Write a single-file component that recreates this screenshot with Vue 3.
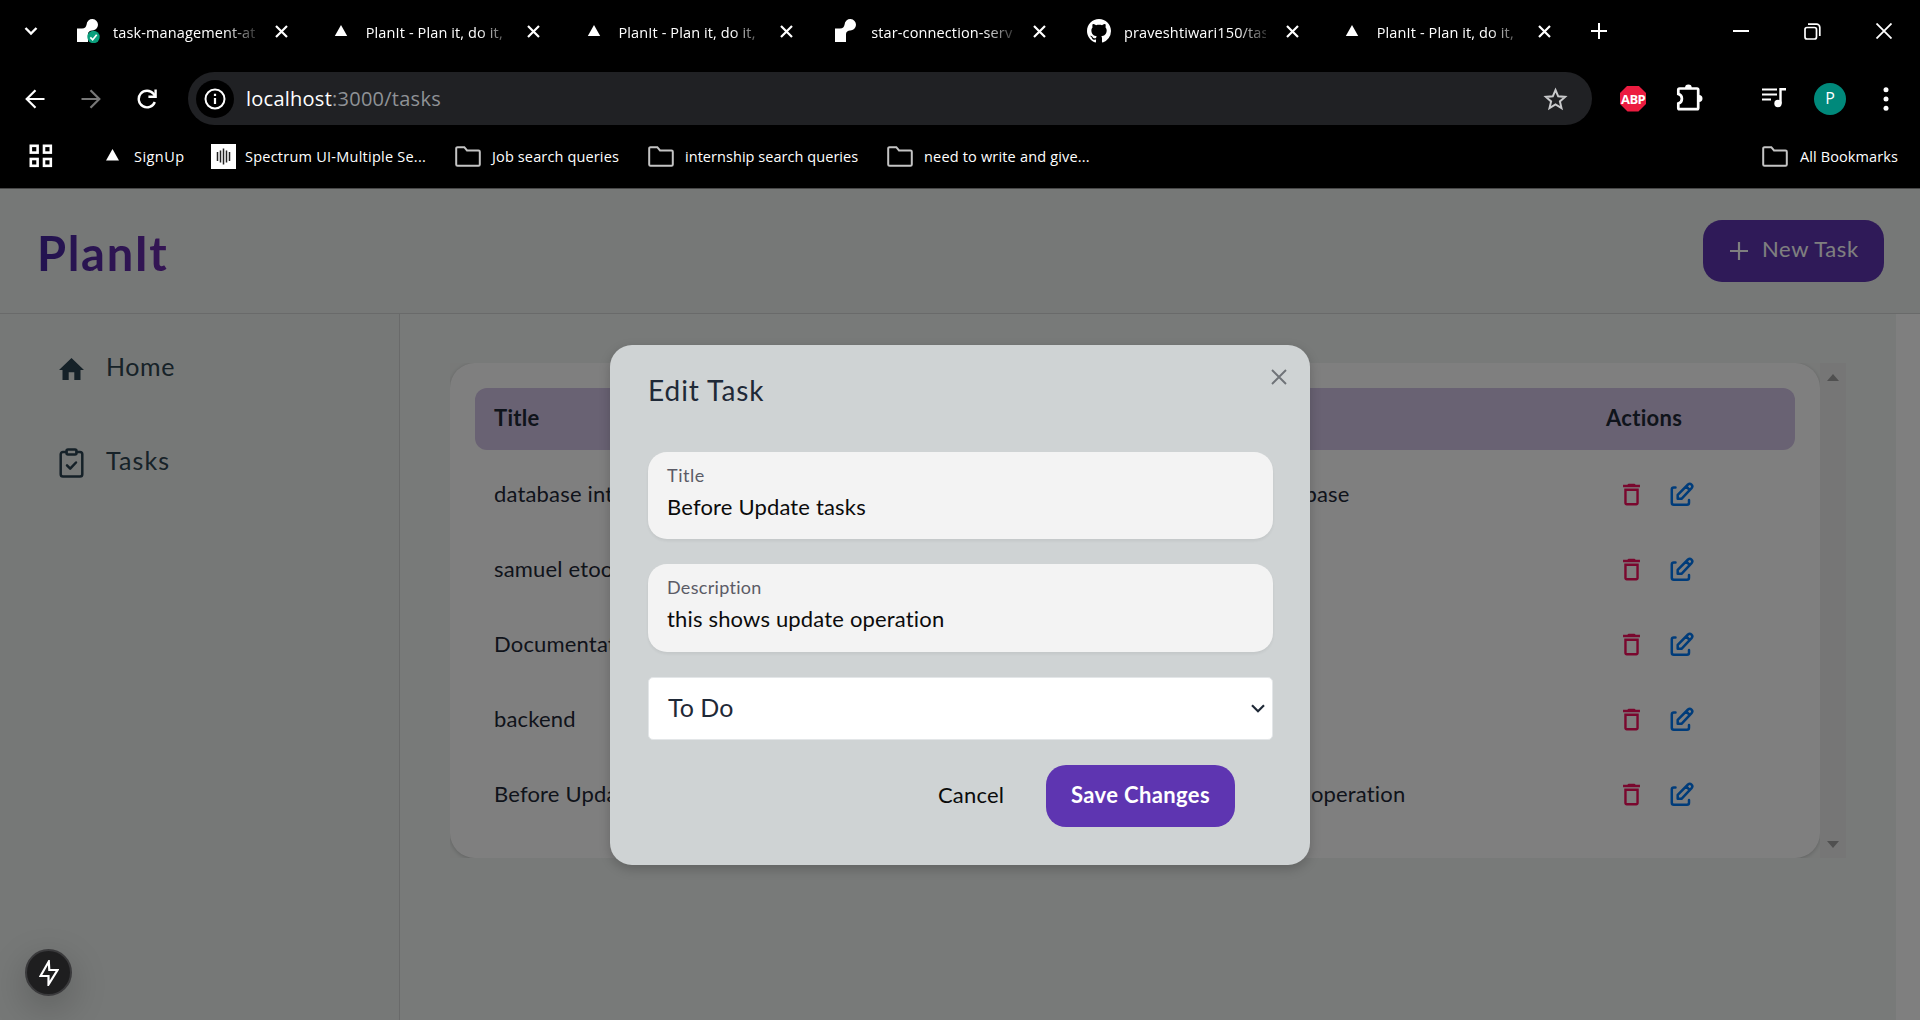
<script setup>
const tabs = [
  { icon: 'render-ok', label: 'task-management-at' },
  { icon: 'tri', label: 'PlanIt - Plan it, do it,' },
  { icon: 'tri', label: 'PlanIt - Plan it, do it,' },
  { icon: 'render', label: 'star-connection-serv' },
  { icon: 'github', label: 'praveshtiwari150/tas' },
  { icon: 'tri', label: 'PlanIt - Plan it, do it,' },
]
const tasks = [
  { title: 'database integration', description: 'implemented database' },
  { title: 'samuel etoo', description: '' },
  { title: 'Documentation', description: '' },
  { title: 'backend', description: '' },
  { title: 'Before Update tasks', description: 'this shows update operation' },
]
</script>

<template>
  <div class="window">
    <div class="browser">
      <div class="tabs">
        <svg class="tab-list" width="14" height="10" viewBox="0 0 14 10"><path d="M1.5 2l5.5 5.5L12.500 2" fill="none" stroke="#fff" stroke-width="2.4" /></svg>
        <div v-for="(t, i) in tabs" :key="i" class="tab">
          <svg v-if="t.icon === 'tri'" class="favicon" viewBox="0 0 24 24"><path d="M12 6l6.200 11H5.800z" fill="#fff" /></svg>
          <svg v-else-if="t.icon === 'github'" class="favicon" viewBox="0 0 16 16"><path fill="#fff" d="M8 0C3.58 0 0 3.58 0 8c0 3.54 2.29 6.53 5.47 7.59.4.07.55-.17.55-.38 0-.19-.01-.82-.01-1.490-2.010.37-2.530-.49-2.690-.94-.09-.23-.48-.94-.82-1.130-.28-.15-.68-.52-.01-.53.63-.01 1.080.58 1.230.82.72 1.210 1.870.87 2.330.66.07-.52.28-.87.51-1.070-1.780-.2-3.640-.89-3.640-3.950 0-.87.31-1.590.82-2.150-.08-.2-.36-1.020.08-2.120 0 0 .67-.21 2.200.82.64-.18 1.320-.27 2-.27s1.360.09 2 .27c1.530-1.040 2.200-.82 2.200-.82.44 1.100.16 1.920.08 2.120.51.56.82 1.270.82 2.150 0 3.070-1.870 3.750-3.650 3.950.29.25.54.73.54 1.480 0 1.070-.01 1.930-.01 2.200 0 .21.15.46.55.38A8.010 8.010 0 0 0 16 8c0-4.420-3.580-8-8-8z" /></svg>
          <svg v-else class="favicon" viewBox="0 0 24 24">
            <path d="M1 9.500h5c3 0 4-1.500 4.600-4A5.700 5.700 0 1 1 16 11.500c-2 .2-4 1-4 3.500v8H1z" fill="#fff" />
            <template v-if="t.icon === 'render-ok'">
              <circle cx="17.500" cy="18" r="6.200" fill="#0a9e7c" />
              <path d="M14.300 18.300l2.400 2.500 4-5" fill="none" stroke="#fff" stroke-width="1.700" />
            </template>
          </svg>
          <span class="tab-label">{{ t.label }}</span>
          <svg class="tab-close" viewBox="0 0 13 13"><path d="M1 1l11 11M12 1L1 12" stroke="#fff" stroke-width="2.200" /></svg>
        </div>
        <svg class="tab-new" width="16" height="16" viewBox="0 0 16 16"><path d="M8 0v16M0 8h16" stroke="#fff" stroke-width="2" /></svg>
        <div class="win-controls">
          <svg width="16" height="16" viewBox="0 0 16 16"><path d="M0 8h16" stroke="#fff" stroke-width="2" /></svg>
          <svg width="17" height="17" viewBox="0 0 17 17" fill="none" stroke="#fff" stroke-width="1.700"><rect x="1" y="4.500" width="11.500" height="11.500" rx="2" /><path d="M4 1.200h8.500a3.300 3.300 0 0 1 3.300 3.300V13" /></svg>
          <svg width="16" height="16" viewBox="0 0 16 16"><path d="M.5.5l15 15M15.500.5l-15 15" stroke="#fff" stroke-width="1.800" /></svg>
        </div>
      </div>

      <div class="toolbar">
        <svg class="nav-back" width="20" height="20" viewBox="0 0 20 20" fill="none" stroke="#fff" stroke-width="2.200"><path d="M19.500 10H2M10.500 1.200L1.700 10l8.800 8.800" /></svg>
        <svg class="nav-fwd" width="20" height="20" viewBox="0 0 20 20" fill="none" stroke="#777" stroke-width="2.200"><path d="M.5 10H18M9.500 1.200l8.800 8.800-8.800 8.800" /></svg>
        <svg class="nav-reload" width="20" height="20" viewBox="0 0 20 20" fill="none" stroke="#fff" stroke-width="2.400"><path d="M17.800 13A8.300 8.300 0 1 1 16.500 4.800L18 7" /><path d="M18.600.5v7.300h-7.200" /></svg>
        <div class="address">
          <span class="site-info"><svg width="22" height="22" viewBox="0 0 22 22"><circle cx="11" cy="11" r="9.500" fill="none" stroke="#fff" stroke-width="2" /><path d="M11 10v6M11 5.800v2.200" stroke="#fff" stroke-width="2.200" /></svg></span>
          <span class="url"><b>localhost</b><i>:3000/tasks</i></span>
          <svg class="star" width="25" height="24" viewBox="0 0 25 24" fill="none" stroke="#c9cacc" stroke-width="2"><path d="M12.500 3l2.700 6.300 6.900.6-5.200 4.500 1.600 6.700-6-3.600-6 3.600 1.600-6.700-5.200-4.500 6.900-.6z" /></svg>
        </div>
        <span class="abp">ABP</span>
        <svg class="puzzle" width="28" height="28" viewBox="0 0 28 28"><path d="M4.500 4.500H22a1.200 1.200 0 0 1 1.200 1.200V24a1.200 1.200 0 0 1-1.200 1.200H4.500A1.200 1.200 0 0 1 3.300 24v-4.500a5 5 0 0 0 0-9.600V5.700a1.200 1.200 0 0 1 1.200-1.200z" fill="none" stroke="#fff" stroke-width="2.700" /><path d="M10 4a3.400 3.400 0 0 1 6.800 0zM24 11a3.400 3.400 0 0 1 0 7z" fill="#fff" /></svg>
        <svg class="queue" width="24" height="20" viewBox="0 0 24 20"><path d="M0 1.500h15M0 6.500h15M0 11.500h9" stroke="#fff" stroke-width="2.100" /><path d="M18.500 15.500V1.300H24" fill="none" stroke="#fff" stroke-width="2.400" /><circle cx="16" cy="15.500" r="3.700" fill="#fff" /></svg>
        <span class="avatar">P</span>
        <svg class="dots" width="6" height="24" viewBox="0 0 6 24" fill="#fff"><circle cx="3" cy="2.700" r="2.500" /><circle cx="3" cy="12" r="2.500" /><circle cx="3" cy="21.300" r="2.500" /></svg>
      </div>

      <div class="bookmarks">
        <svg class="apps" width="24" height="24" viewBox="0 0 24 24" fill="none" stroke="#fff" stroke-width="2.600"><rect x="1.800" y="1.800" width="6.800" height="6.800" /><rect x="15" y="1.800" width="6.800" height="6.800" /><rect x="1.800" y="15" width="6.800" height="6.800" /><rect x="15" y="15" width="6.800" height="6.800" /></svg>
        <svg class="bm-tri" width="13" height="12" viewBox="0 0 13 12"><path d="M6.500 0L13 11.500H0z" fill="#fff" /></svg>
        <span class="bm b1">SignUp</span>
        <svg class="bm-spec" width="25" height="25" viewBox="0 0 25 25"><rect width="25" height="25" fill="#fff" /><path d="M6.500 8v9M9.500 6.500v12M12.500 4.500v16M15.500 6.500v12M18.500 8v9" stroke="#222" stroke-width="1.500" /></svg>
        <span class="bm b2">Spectrum UI-Multiple Se...</span>
        <svg class="folder" viewBox="0 0 26 21"><path d="M2.500 1.200h6.800L12 4.400h11.500a1.300 1.300 0 0 1 1.300 1.300v12.800a1.300 1.300 0 0 1-1.300 1.300h-21a1.300 1.300 0 0 1-1.300-1.300v-16a1.300 1.300 0 0 1 1.300-1.300z" /></svg>
        <span class="bm b3">Job search queries</span>
        <svg class="folder" viewBox="0 0 26 21"><path d="M2.500 1.200h6.800L12 4.400h11.500a1.300 1.300 0 0 1 1.300 1.300v12.800a1.300 1.300 0 0 1-1.300 1.300h-21a1.300 1.300 0 0 1-1.300-1.300v-16a1.300 1.300 0 0 1 1.300-1.300z" /></svg>
        <span class="bm b4">internship search queries</span>
        <svg class="folder" viewBox="0 0 26 21"><path d="M2.500 1.200h6.800L12 4.400h11.500a1.300 1.300 0 0 1 1.300 1.300v12.800a1.300 1.300 0 0 1-1.300 1.300h-21a1.300 1.300 0 0 1-1.300-1.300v-16a1.300 1.300 0 0 1 1.300-1.300z" /></svg>
        <span class="bm b5">need to write and give...</span>
        <svg class="folder last" viewBox="0 0 26 21"><path d="M2.500 1.200h6.800L12 4.400h11.500a1.300 1.300 0 0 1 1.300 1.300v12.800a1.300 1.300 0 0 1-1.300 1.300h-21a1.300 1.300 0 0 1-1.300-1.300v-16a1.300 1.300 0 0 1 1.300-1.300z" /></svg>
        <span class="bm b6">All Bookmarks</span>
      </div>
    </div>

    <div class="app">
      <header class="header">
        <h1 class="logo">PlanIt</h1>
        <button class="new-task">
          <svg width="18" height="18" viewBox="0 0 18 18"><path d="M9 0v18M0 9h18" stroke="#fff" stroke-width="2.200" /></svg>
          <span>New Task</span>
        </button>
      </header>
      <div class="body">
        <nav class="sidebar">
          <a class="nav-item">
            <svg width="25" height="22" viewBox="0 0 25 22"><path d="M12.500 0L25 12h-3.500v10h-6.200v-7.800H9.700V22H3.500V12H0z" fill="#2a4250" /></svg>
            <span class="n1">Home</span>
          </a>
          <a class="nav-item">
            <svg width="25" height="30" viewBox="0 0 25 30" fill="none" stroke="#2a4250" stroke-width="2.500" stroke-linecap="round" stroke-linejoin="round"><path d="M7.500 4H4a2.300 2.300 0 0 0-2.300 2.300v19.900A2.300 2.300 0 0 0 4 28.500h17a2.300 2.300 0 0 0 2.300-2.300V6.300A2.300 2.300 0 0 0 21 4h-3.500" /><rect x="7.500" y="1.500" width="10" height="5" rx="1.500" /><path d="M8 17.300l3.200 3.400 5.800-6.200" /></svg>
            <span class="n2">Tasks</span>
          </a>
        </nav>
        <main class="content">
          <div class="table-scroll">
            <section class="card">
              <div class="thead"><span class="c-title">Title</span><span class="c-desc">Description</span><span class="c-act">Actions</span></div>
              <div v-for="(t, i) in tasks" :key="i" class="trow">
                <span class="c-title">{{ t.title }}</span>
                <span class="c-desc">{{ t.description }}</span>
                <span class="c-icons">
                  <svg class="trash" width="29" height="29" viewBox="0 0 24 24"><path fill="#f50f5d" d="M6 19c0 1.100.9 2 2 2h8c1.100 0 2-.9 2-2V7H6v12zM8 9h8v10H8V9zm7.500-5l-1-1h-5l-1 1H5v2h14V4z" /></svg>
                  <svg class="edit" width="24" height="24" viewBox="0 0 24 24" fill="none" stroke="#0078f5" stroke-width="2.500" stroke-linecap="round" stroke-linejoin="round"><path d="M5.500 5.500H3.800a2 2 0 0 0-2 2v13.200a2 2 0 0 0 2 2H17a2 2 0 0 0 2-2V18" /><path d="M7.700 16.800v-4L18 2.500a2.550 2.550 0 0 1 3.600 3.600L11.500 16.800zM16.300 4.500l3.300 3.300" /></svg>
                </span>
              </div>
            </section>
            <div class="scrollbar">
              <svg width="12" height="7" viewBox="0 0 12 7"><path d="M6 0l6 7H0z" fill="#a0a0a0" /></svg>
              <svg width="12" height="7" viewBox="0 0 12 7"><path d="M6 7L0 0h12z" fill="#a0a0a0" /></svg>
            </div>
          </div>
        </main>
      </div>

      <div class="backdrop">
        <section class="modal">
          <svg class="modal-close" width="16" height="16" viewBox="0 0 16 16"><path d="M1 1l14 14M15 1L1 15" stroke="#6f7378" stroke-width="1.900" /></svg>
          <h2>Edit Task</h2>
          <div class="field"><label class="l1">Title</label><span>Before Update tasks</span></div>
          <div class="field"><label class="l2">Description</label><span>this shows update operation</span></div>
          <div class="select"><span>To Do</span><svg width="14" height="9" viewBox="0 0 14 9"><path d="M1 1.200l6 6 6-6" fill="none" stroke="#1f2937" stroke-width="2.200" /></svg></div>
          <div class="actions"><span class="cancel">Cancel</span><button class="save">Save Changes</button></div>
        </section>
      </div>
      <div class="dev">
        <svg width="20" height="26" viewBox="0 0 20 26"><path d="M9.800 1.500L1.500 16h8v8.500L18.500 10h-8.200z" fill="none" stroke="#fff" stroke-width="2.200" /></svg>
      </div>
    </div>
  </div>
</template>

<style>
body { margin: 0; background: #000; overflow: hidden; }
</style>

<style scoped>
.window { width: 1920px; height: 1020px; display: flex; flex-direction: column; overflow: hidden; }
.window * { box-sizing: border-box; }
svg { flex: none; display: block; }
button { border: 0; padding: 0; font: inherit; letter-spacing: inherit; }

.browser { height: 189px; flex: none; background: #000; border-bottom: 1px solid #484848; color: #fff; font-family: "Open Sans", "Noto Sans", sans-serif; }
.tabs { height: 62px; display: flex; align-items: center; padding-left: 24px; }
.tab-list { margin-right: 38px; }
.tab { width: 252.750px; flex: none; display: flex; align-items: center; }
.favicon { width: 24px; height: 24px; }
.tab-label { width: 142px; margin-left: 13px; padding-top: 3px; font-size: 14.500px; line-height: 22px; letter-spacing: 0.120px; white-space: nowrap; overflow: hidden; -webkit-mask-image: linear-gradient(90deg, #000 112px, transparent 150px); mask-image: linear-gradient(90deg, #000 112px, transparent 150px); }
.tab-close { width: 13px; height: 13px; margin-left: 19.500px; }
.tab-new { margin-left: -2px; }
.win-controls { margin-left: auto; padding-right: 28px; display: flex; gap: 55px; align-items: center; }

.toolbar { height: 73px; display: flex; align-items: center; padding-left: 25px; }
.nav-fwd { margin-left: 36px; }
.nav-reload { margin-left: 36px; }
.address { margin-left: 31px; width: 1404px; height: 53px; border-radius: 27px; background: #202124; display: flex; align-items: center; padding: 0 24px 0 8px; }
.site-info { width: 38px; height: 38px; border-radius: 50%; background: #000; display: flex; align-items: center; justify-content: center; }
.url { margin-left: 12px; font-size: 20px; line-height: 30px; letter-spacing: 0.250px; }
.url b { font-weight: 400; }
.url i { font-style: normal; color: #8f9296; }
.star { margin-left: auto; }
.abp { width: 26px; height: 26px; margin-left: 28px; background: #ec1c40; clip-path: polygon(29% 0, 71% 0, 100% 29%, 100% 71%, 71% 100%, 29% 100%, 0 71%, 0 29%); font: 700 13px/26px "Open Sans", sans-serif; text-align: center; letter-spacing: -0.700px; }
.puzzle { margin-left: 29px; margin-top: -2px; }
.queue { margin-left: 59px; margin-top: -1px; }
.avatar { width: 32px; height: 32px; margin-left: 28px; border-radius: 50%; background: #00897b; text-align: center; font-size: 16px; line-height: 31px; }
.dots { margin-left: 37px; }

.bookmarks { height: 42px; display: flex; align-items: center; padding: 0 22px 0 29px; font-size: 14.500px; line-height: 20px; white-space: nowrap; }
.bm-tri { margin-left: 53px; margin-top: -2px; }
.bm { margin-left: 11px; padding-top: 1px; }
.b1 { margin-left: 15px; width: 51px; letter-spacing: 0.450px; }
.bm-spec { margin-left: 26px; }
.b2 { margin-left: 9px; width: 181px; letter-spacing: 0.240px; }
.folder { width: 26px; height: 21px; margin-left: 29px; fill: none; stroke: #c4c4c4; stroke-width: 2; }
.b3 { width: 127px; letter-spacing: 0.140px; }
.b4 { width: 173px; letter-spacing: 0.050px; }
.b5 { width: 166px; letter-spacing: 0.180px; }
.b6 { letter-spacing: 0.100px; margin-left: 12px; }
.last { margin-left: auto; }

.app { flex: 1; position: relative; display: flex; flex-direction: column; background: #edf0ee; font-family: Lato, "Noto Sans", sans-serif; font-size: 22px; color: #1f2937; letter-spacing: 0.170px; font-variant-ligatures: none; }
.header { height: 125px; flex: none; border-bottom: 1px solid #d3d5d4; display: flex; align-items: center; justify-content: space-between; padding: 0 36px 0 37px; }
.logo { margin: 4px 0 0; font-size: 47px; line-height: 56px; font-weight: 700; letter-spacing: 1.700px; color: transparent; background: linear-gradient(90deg, #4527a0, #6a2ba8); -webkit-background-clip: text; background-clip: text; }
.new-task { width: 181px; height: 62px; border-radius: 19px; background: #5e35b1; color: #fff; display: flex; align-items: center; padding-left: 27px; }
.new-task span { margin-left: 14px; padding-bottom: 6px; letter-spacing: 0.600px; }
.body { flex: 1; display: flex; background: #fff; }
.sidebar { width: 400px; border-right: 1px solid #d3d5d4; padding: 31px 0 0 59px; color: #2e4450; background: #edf0ee; }
.nav-item { height: 48px; margin-bottom: 46px; display: flex; align-items: center; font-size: 25px; }
.nav-item span { margin-left: 22px; padding-bottom: 6px; }
.n1 { letter-spacing: 0.600px; }
.n2 { letter-spacing: 1.100px; }
.content { width: 1496px; background: #f0f4f2; padding: 49px 50px 0; }
.table-scroll { display: flex; height: 495px; background: #f0f3f1; overflow: hidden; }
.card { width: 1370px; background: #fff; border-radius: 25px; padding: 25px; box-shadow: 0 1px 4px rgba(0, 0, 0, .2); }
.thead { height: 62px; border-radius: 12px; background: #d3c4e6; display: flex; align-items: center; padding-bottom: 3px; padding-left: 19px; font-weight: 700; margin-bottom: 7px; letter-spacing: 0.300px; }
.trow { height: 75px; display: flex; align-items: center; padding-left: 19px; }
.c-title { width: 634px; }
.c-desc { width: 478px; }
.trow .c-title, .trow .c-desc { padding-bottom: 2px; }
.c-icons { display: flex; align-items: center; gap: 23.500px; margin-left: 11px; }
.edit { margin-top: -1px; }
.scrollbar { width: 26px; background: #ededed; display: flex; flex-direction: column; justify-content: space-between; align-items: center; padding: 11px 0 10px; }

.backdrop { position: absolute; inset: 0; background: rgba(0, 0, 0, .5); display: flex; align-items: center; justify-content: center; }
.modal { position: relative; width: 700px; height: 520px; border-radius: 22px; background: #cfd3d4; padding: 25px 37px 0 38px; box-shadow: 0 4px 12px rgba(0, 0, 0, .2); color: #0b0b0b; }
.modal-close { position: absolute; right: 23px; top: 24px; }
.modal h2 { margin: 0 0 41px; font-size: 28px; line-height: 41px; font-weight: 400; letter-spacing: 0.950px; color: #1f2937; }
.field { height: 87.500px; margin-bottom: 25px; border-radius: 19px; background: #f3f3f3; box-shadow: 0 2px 3px rgba(0, 0, 0, .06); padding: 11px 19px; display: flex; flex-direction: column; align-items: flex-start; }
.field label { font-size: 18px; line-height: 24px; color: #5b5b66; }
.l1 { letter-spacing: 0.550px; }
.l2 { letter-spacing: 0.300px; }
.field span { line-height: 28px; margin-top: 6px; }
.select { height: 63px; border-radius: 5px; background: #fff; border: 1px solid #e3e6e8; display: flex; align-items: center; justify-content: space-between; padding: 0 7px 0 19px; font-size: 25px; color: #1f2937; letter-spacing: 0; }
.select span { padding-bottom: 3px; }
.actions { margin-top: 25px; padding-right: 38px; display: flex; justify-content: flex-end; align-items: center; }
.cancel { width: 108px; padding-bottom: 3px; }
.save { width: 189px; height: 62px; border-radius: 20px; background: #5e35b1; color: #fff; font-weight: 700; padding-bottom: 3px; letter-spacing: 0.380px; }
.dev { position: absolute; left: 25px; bottom: 24px; width: 47px; height: 47px; border-radius: 50%; background: #1e1e1f; border: 2px solid #3a3a3c; box-shadow: 0 12px 36px rgba(0, 0, 0, .22); display: flex; align-items: center; justify-content: center; }
</style>
